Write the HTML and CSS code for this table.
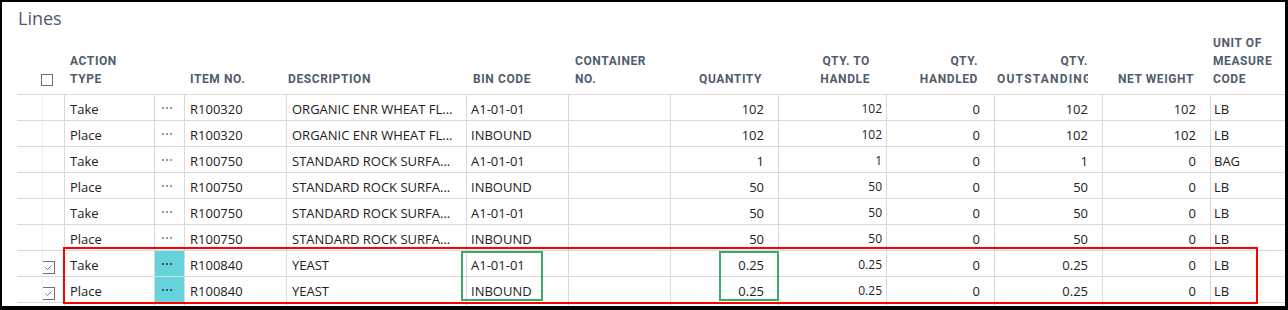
FILE: index.html
```html
<!DOCTYPE html>
<html lang="en">
<head>
<meta charset="utf-8">
<title>Lines</title>
<link rel="stylesheet" href="styles.css">
</head>
<body>
<div class="frame">
  <h2 class="title">Lines</h2>
  <div class="grid-wrap">
    <table class="lines">
      <colgroup>
        <col class="w-sel"><col class="w-chk"><col class="w-act"><col class="w-dots"><col class="w-item"><col class="w-desc"><col class="w-bin"><col class="w-cont"><col class="w-num"><col class="w-num"><col class="w-num"><col class="w-num"><col class="w-num"><col class="w-uom">
      </colgroup>
      <thead>
        <tr>
          <th></th>
          <th class="h-chk"><span class="box"></span></th>
          <th class="h-act">ACTION<br>TYPE</th>
          <th></th>
          <th class="h-item">ITEM NO.</th>
          <th class="h-desc">DESCRIPTION</th>
          <th class="h-bin">BIN CODE</th>
          <th class="h-cont">CONTAINER<br>NO.</th>
          <th class="h-num">QUANTITY</th>
          <th class="h-num">QTY. TO<br>HANDLE</th>
          <th class="h-num">QTY.<br>HANDLED</th>
          <th class="h-num h-clip"><div class="clip">QTY.<br><span class="wide">OUTSTANDING</span></div></th>
          <th class="h-num">NET WEIGHT</th>
          <th class="h-uom">UNIT OF<br>MEASURE<br>CODE</th>
        </tr>
      </thead>
      <tbody>
        <tr>
          <td class="c-sel"></td><td class="c-chk"></td><td class="c-txt">Take</td>
          <td class="c-dots"><svg class="dots" width="10" height="2" viewBox="0 0 10 2"><circle cx="1" cy="1" r="1"/><circle cx="5" cy="1" r="1"/><circle cx="9" cy="1" r="1"/></svg></td>
          <td class="c-txt">R100320</td><td class="c-txt">ORGANIC ENR WHEAT FL...</td><td class="c-txt c-bin">A1-01-01</td><td class="c-txt"></td>
          <td class="c-num">102</td><td class="c-edit">102</td><td class="c-num">0</td><td class="c-num">102</td><td class="c-num">102</td><td class="c-txt c-uom">LB</td>
        </tr>
        <tr>
          <td class="c-sel"></td><td class="c-chk"></td><td class="c-txt">Place</td>
          <td class="c-dots"><svg class="dots" width="10" height="2" viewBox="0 0 10 2"><circle cx="1" cy="1" r="1"/><circle cx="5" cy="1" r="1"/><circle cx="9" cy="1" r="1"/></svg></td>
          <td class="c-txt">R100320</td><td class="c-txt">ORGANIC ENR WHEAT FL...</td><td class="c-txt c-bin">INBOUND</td><td class="c-txt"></td>
          <td class="c-num">102</td><td class="c-edit">102</td><td class="c-num">0</td><td class="c-num">102</td><td class="c-num">102</td><td class="c-txt c-uom">LB</td>
        </tr>
        <tr>
          <td class="c-sel"></td><td class="c-chk"></td><td class="c-txt">Take</td>
          <td class="c-dots"><svg class="dots" width="10" height="2" viewBox="0 0 10 2"><circle cx="1" cy="1" r="1"/><circle cx="5" cy="1" r="1"/><circle cx="9" cy="1" r="1"/></svg></td>
          <td class="c-txt">R100750</td><td class="c-txt">STANDARD ROCK SURFA...</td><td class="c-txt c-bin">A1-01-01</td><td class="c-txt"></td>
          <td class="c-num">1</td><td class="c-edit">1</td><td class="c-num">0</td><td class="c-num">1</td><td class="c-num">0</td><td class="c-txt c-uom">BAG</td>
        </tr>
        <tr>
          <td class="c-sel"></td><td class="c-chk"></td><td class="c-txt">Place</td>
          <td class="c-dots"><svg class="dots" width="10" height="2" viewBox="0 0 10 2"><circle cx="1" cy="1" r="1"/><circle cx="5" cy="1" r="1"/><circle cx="9" cy="1" r="1"/></svg></td>
          <td class="c-txt">R100750</td><td class="c-txt">STANDARD ROCK SURFA...</td><td class="c-txt c-bin">INBOUND</td><td class="c-txt"></td>
          <td class="c-num">50</td><td class="c-edit">50</td><td class="c-num">0</td><td class="c-num">50</td><td class="c-num">0</td><td class="c-txt c-uom">LB</td>
        </tr>
        <tr>
          <td class="c-sel"></td><td class="c-chk"></td><td class="c-txt">Take</td>
          <td class="c-dots"><svg class="dots" width="10" height="2" viewBox="0 0 10 2"><circle cx="1" cy="1" r="1"/><circle cx="5" cy="1" r="1"/><circle cx="9" cy="1" r="1"/></svg></td>
          <td class="c-txt">R100750</td><td class="c-txt">STANDARD ROCK SURFA...</td><td class="c-txt c-bin">A1-01-01</td><td class="c-txt"></td>
          <td class="c-num">50</td><td class="c-edit">50</td><td class="c-num">0</td><td class="c-num">50</td><td class="c-num">0</td><td class="c-txt c-uom">LB</td>
        </tr>
        <tr>
          <td class="c-sel"></td><td class="c-chk"></td><td class="c-txt">Place</td>
          <td class="c-dots"><svg class="dots" width="10" height="2" viewBox="0 0 10 2"><circle cx="1" cy="1" r="1"/><circle cx="5" cy="1" r="1"/><circle cx="9" cy="1" r="1"/></svg></td>
          <td class="c-txt">R100750</td><td class="c-txt">STANDARD ROCK SURFA...</td><td class="c-txt c-bin">INBOUND</td><td class="c-txt"></td>
          <td class="c-num">50</td><td class="c-edit">50</td><td class="c-num">0</td><td class="c-num">50</td><td class="c-num">0</td><td class="c-txt c-uom">LB</td>
        </tr>
        <tr>
          <td class="c-sel"></td>
          <td class="c-chk"><svg class="tick" width="13" height="13" viewBox="0 0 13 13"><rect x="0.5" y="0.5" width="12" height="12"/><path d="M3.5 6.5 L5.5 8.5 L9.5 4.5"/></svg></td>
          <td class="c-txt">Take</td>
          <td class="c-dots is-active"><svg class="dots" width="10" height="2" viewBox="0 0 10 2"><circle cx="1" cy="1" r="1"/><circle cx="5" cy="1" r="1"/><circle cx="9" cy="1" r="1"/></svg></td>
          <td class="c-txt">R100840</td><td class="c-txt">YEAST</td><td class="c-txt c-bin">A1-01-01</td><td class="c-txt"></td>
          <td class="c-num">0.25</td><td class="c-edit">0.25</td><td class="c-num">0</td><td class="c-num">0.25</td><td class="c-num">0</td><td class="c-txt c-uom">LB</td>
        </tr>
        <tr>
          <td class="c-sel"></td>
          <td class="c-chk"><svg class="tick" width="13" height="13" viewBox="0 0 13 13"><rect x="0.5" y="0.5" width="12" height="12"/><path d="M3.5 6.5 L5.5 8.5 L9.5 4.5"/></svg></td>
          <td class="c-txt">Place</td>
          <td class="c-dots is-active"><svg class="dots" width="10" height="2" viewBox="0 0 10 2"><circle cx="1" cy="1" r="1"/><circle cx="5" cy="1" r="1"/><circle cx="9" cy="1" r="1"/></svg></td>
          <td class="c-txt">R100840</td><td class="c-txt">YEAST</td><td class="c-txt c-bin">INBOUND</td><td class="c-txt"></td>
          <td class="c-num">0.25</td><td class="c-edit">0.25</td><td class="c-num">0</td><td class="c-num">0.25</td><td class="c-num">0</td><td class="c-txt c-uom">LB</td>
        </tr>
        <tr>
          <td class="c-sel"></td><td class="c-chk"></td><td class="c-txt"></td><td class="c-dots"></td><td class="c-txt"></td><td class="c-txt"></td><td class="c-txt"></td><td class="c-txt"></td>
          <td class="c-num"></td><td class="c-edit"></td><td class="c-num"></td><td class="c-num"></td><td class="c-num"></td><td class="c-txt"></td>
        </tr>
      </tbody>
    </table>
    <div class="mark mark-red"></div>
    <div class="mark mark-green mark-bin"></div>
    <div class="mark mark-green mark-qty"></div>
  </div>
</div>
</body>
</html>
```
FILE: styles.css
```css
html {
  background: #000;
}
body {
  margin: 0;
  padding: 2px 3px 4px 2px;
}
.frame {
  position: relative;
  height: 304px;
  background: #fff;
  overflow: hidden;
}
.title {
  margin: 0;
  padding: 4px 0 0 16px;
  height: 24px;
  font-family: "Open Sans", "Noto Sans", sans-serif;
  font-size: 18px;
  font-weight: 400;
  line-height: 24px;
  color: #505c6d;
}
.grid-wrap {
  padding-left: 15px;
}
.lines {
  width: 1293px;
  table-layout: fixed;
  border-collapse: separate;
  border-spacing: 0;
  font-family: "Open Sans", "Noto Sans", sans-serif;
  font-size: 13px;
  color: #212121;
}
.w-sel { width: 25px; }
.w-chk { width: 22px; }
.w-act { width: 90px; }
.w-dots { width: 30px; }
.w-item { width: 102px; }
.w-desc { width: 180px; }
.w-bin { width: 102px; }
.w-cont { width: 102px; }
.w-num { width: 108px; }
.w-uom { width: 100px; }

/* header */
.lines th {
  height: 54px;
  padding: 4px 0 6px 0;
  vertical-align: bottom;
  text-align: left;
  font-family: Roboto, "Liberation Sans", sans-serif;
  font-size: 12px;
  font-weight: 700;
  letter-spacing: 0.6px;
  line-height: 18px;
  color: #505c6d;
  white-space: nowrap;
  border-bottom: 1px solid #d9d9d9;
}
.box {
  display: block;
  width: 12px;
  height: 12px;
  margin: 0 0 2px -1px;
  box-sizing: border-box;
  border: 1px solid #6e6e6e;
  background: #fff;
}
.lines th.h-act { padding-left: 6px; }
.lines th.h-item { padding-left: 6px; }
.lines th.h-desc { padding-left: 2px; }
.lines th.h-bin { padding-left: 7px; }
.lines th.h-cont { padding-left: 7px; }
.lines th.h-num { padding-right: 16px; text-align: right; }
.lines th.h-clip { padding-left: 3px; padding-right: 14px; }
.clip { overflow: hidden; }
.wide { letter-spacing: 1.2px; }
.lines th.h-uom { padding-left: 3px; }

/* body */
.lines td {
  height: 22px;
  padding: 3px 0 0 0;
  line-height: 22px;
  vertical-align: top;
  white-space: nowrap;
  overflow: hidden;
  border-bottom: 1px solid #d9d9d9;
  border-left: 1px solid #d9d9d9;
}
.lines td.c-sel { border-left: 0; }
.lines td.c-chk { border-left-color: #efefef; }
.lines td.c-txt { padding-left: 5px; }
.lines td.c-bin { padding-left: 4px; }
.lines td.c-uom { padding-left: 3px; }
.lines td.c-num { padding-right: 14px; text-align: right; }
.lines td.c-edit { padding-right: 4px; text-align: right; font-size: 12px; }
.lines td.c-dots { padding: 0; }
.lines td.is-active { background: #64d3dc; }
.dots {
  display: block;
  margin: 12px 0 0 7px;
  fill: #7a7a7a;
}
.is-active .dots { fill: #2b2b2b; }
.tick {
  display: block;
  margin: 7px 0 0 -1px;
  fill: #fff;
  stroke: #707070;
  stroke-width: 1;
}
.tick path { fill: none; }

/* annotation overlays */
.mark {
  position: absolute;
  box-sizing: border-box;
  border: 2px solid;
  pointer-events: none;
}
.mark-red {
  left: 61px;
  top: 245px;
  width: 1195px;
  height: 57px;
  border-color: #f00;
}
.mark-green {
  top: 249px;
  height: 50px;
  border-color: #3aaa6a;
}
.mark-bin { left: 459px; width: 82px; }
.mark-qty { left: 717px; width: 60px; }
```
